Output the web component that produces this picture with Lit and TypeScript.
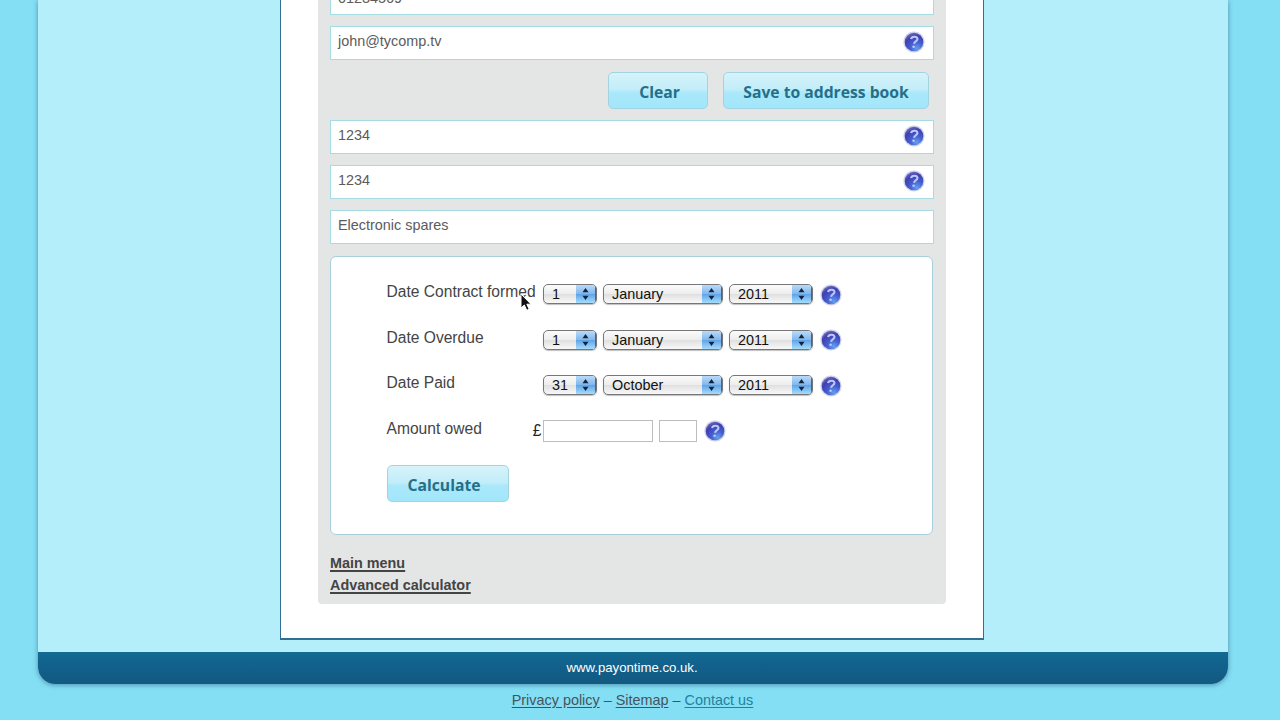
import { LitElement, html, css } from "lit";
import { customElement, property } from "lit/decorators.js";

@customElement("help-icon")
class HelpIcon extends LitElement {
  static styles = css`
    :host { display: block; width: 22px; height: 22px; flex: none; }
    svg { display: block; }
  `;
  render() {
    return html`<svg width="22" height="22" viewBox="0 0 22 22">
      <defs>
        <radialGradient id="g" cx="0.65" cy="0.85" r="0.85">
          <stop offset="0" stop-color="#64a0ee" />
          <stop offset="0.4" stop-color="#4560d0" />
          <stop offset="0.8" stop-color="#403fb0" />
          <stop offset="1" stop-color="#6668b8" />
        </radialGradient>
      </defs>
      <circle cx="11" cy="11" r="10.6" fill="#b9bfe6" opacity="0.7" />
      <circle cx="11" cy="11" r="9.3" fill="url(#g)" />
      <path d="M8 8.1C8.5 6.1 10 5.6 11.7 5.7C13.8 5.8 14.9 7.1 14.3 8.7C13.7 10.2 11.5 10.7 11 12.8" fill="none" stroke="#bcc6fa" stroke-width="2.1" />
      <circle cx="10.6" cy="15.7" r="1.3" fill="#bcc6fa" />
    </svg>`;
  }
}

@customElement("popup-select")
class PopupSelect extends LitElement {
  @property() value = "";
  static styles = css`
    :host { display: block; }
    .box {
      box-sizing: border-box; height: 20px; display: flex; border: 1px solid #77777a;
      border-radius: 5px; overflow: hidden; box-shadow: 0 1px 1px rgba(0, 0, 0, 0.25);
      background: linear-gradient(#fbfbfb, #ededed 48%, #e0e0e0 52%, #f8f8f8);
    }
    .label { flex: 1; padding-left: 8.5px; font: 14.4px/18px "Liberation Sans", Arial, sans-serif; color: #111; }
    .cap {
      width: 20px; box-shadow: inset -1px 0 #3567ab;
      background: linear-gradient(#b8dbf8, #82b8ee 48%, #61a5e8 52%, #a4dcfb);
    }
    svg { display: block; }
  `;
  render() {
    return html`<div class="box"><span class="label">${this.value}</span>
      <span class="cap"><svg width="20" height="18" viewBox="0 0 20 18">
        <path d="M6.5 7.2L9.5 3L12.5 7.2ZM6.5 10.8L9.5 15L12.5 10.8Z" fill="#10243f" />
      </svg></span></div>`;
  }
}

const DATES = [
  { label: "Date Contract formed", day: "1", month: "January", year: "2011" },
  { label: "Date Overdue", day: "1", month: "January", year: "2011" },
  { label: "Date Paid", day: "31", month: "October", year: "2011" },
];

@customElement("app-root")
class AppRoot extends LitElement {
  static styles = css`
    :host {
      display: block; position: relative; width: 1280px; height: 720px; overflow: hidden;
      background: #84dff4; font-family: "Liberation Sans", Arial, sans-serif; color: #444;
    }
    * { box-sizing: border-box; }
    .wrap {
      width: 1190px; height: 684px; margin-left: 38px; background: #b3eefa; display: flex;
      flex-direction: column; border-radius: 0 0 17px 17px; overflow: hidden;
      box-shadow: 0 1px 5px rgba(40, 90, 130, 0.6);
    }
    .page {
      width: 704px; height: 640px; margin: 0 0 12px 242px; padding: 0 37px; background: #fff;
      border: solid #326f92; border-width: 0 1px 2px;
    }
    .form { width: 628px; height: 604px; padding: 0 12px; background: #e4e6e6; border-radius: 0 0 4px 4px; }
    .field {
      width: 604px; height: 34px; display: flex; justify-content: space-between; padding: 4px 8px 0 7px;
      border: 1px solid #a5dbe3; background: #fff; font-size: 14.4px; line-height: 20px; color: #5b5b5b;
    }
    .field + .field { margin-top: 11px; }
    .cut { height: 15px; border-top: 0; padding-top: 0; align-items: flex-end; }
    .cut span { margin-bottom: 6px; }
    .buttons { display: flex; justify-content: flex-end; gap: 15px; padding: 12px 5px 11px 0; }
    .btn {
      height: 37px; border: 1px solid #a3d3e1; border-radius: 5px; text-align: center;
      background: linear-gradient(#d6f3fa, #c1edf9 48%, #aae8fa 56%, #a2e6fb);
      font: bold 15.7px/39px "Open Sans", sans-serif; color: #256f88; white-space: nowrap; padding: 0;
      display: block;
    }
    .clear { width: 100px; padding-left: 3px; }
    .save { width: 206px; }
    .calc { width: 122px; padding-right: 7px; margin-top: 24px; line-height: 39px; }
    .panel {
      width: 603px; height: 279px; margin-top: 12px; padding: 25px 0 0 55.5px; background: #fff;
      border: 1px solid #a9cfdd; border-radius: 6px;
    }
    .row { display: flex; height: 22px; margin-bottom: 23.5px; font-size: 15.6px; line-height: 20px; }
    .lab { width: 156px; display: flex; justify-content: space-between; white-space: nowrap; }
    .pound { color: #222; line-height: 23px; margin-right: 1px; }
    .row popup-select { margin: 2px 6px 0 0; }
    .row help-icon { margin: 1.5px 0 0 1px; }
    .day { width: 54px; }
    .month { width: 120px; }
    .year { width: 84px; }
    .amt { height: 22px; margin: 1px 6px 0 0; border: 1px solid #bdbdbd; background: #fff; }
    .pounds { width: 110px; }
    .pence { width: 38px; }
    .links { padding-top: 17px; font-weight: bold; font-size: 14.4px; line-height: 22px; }
    .links a { display: table; text-decoration: underline; text-underline-offset: 2px; text-decoration-thickness: 2px; }
    .bar {
      height: 32px; flex: none; background: linear-gradient(#136a92, #115f8b 50%, #125a80);
      color: #fff; font-size: 13.2px; line-height: 31px; text-align: center; padding-right: 2px;
    }
    .foot { text-align: center; font-size: 14.4px; line-height: 20px; padding: 6px 15px 0 0; color: #44545c; }
    .foot a { text-decoration: underline; text-underline-offset: 2px; }
    .foot .contact { color: #23819d; }
    .cursor { position: absolute; left: 519px; top: 292px; }
  `;
  render() {
    return html`
      <div class="wrap">
        <div class="page"><div class="form">
          <div class="field cut"><span>01234569</span></div>
          <div class="field"><span>john@tycomp.tv</span><help-icon></help-icon></div>
          <div class="buttons">
            <button class="btn clear">Clear</button>
            <button class="btn save">Save to address book</button>
          </div>
          <div class="field"><span>1234</span><help-icon></help-icon></div>
          <div class="field"><span>1234</span><help-icon></help-icon></div>
          <div class="field"><span>Electronic spares</span></div>
          <div class="panel">
            ${DATES.map((d) => html`<div class="row">
              <div class="lab">${d.label}</div>
              <popup-select class="day" .value=${d.day}></popup-select>
              <popup-select class="month" .value=${d.month}></popup-select>
              <popup-select class="year" .value=${d.year}></popup-select>
              <help-icon></help-icon>
            </div>`)}
            <div class="row">
              <div class="lab"><span>Amount owed</span><span class="pound">£</span></div>
              <div class="amt pounds"></div><div class="amt pence"></div>
              <help-icon></help-icon>
            </div>
            <button class="btn calc">Calculate</button>
          </div>
          <div class="links"><a>Main menu</a><a>Advanced calculator</a></div>
        </div></div>
        <div class="bar">www.payontime.co.uk.</div>
      </div>
      <div class="foot"><a>Privacy policy</a> – <a>Sitemap</a> – <a class="contact">Contact us</a></div>
      <svg class="cursor" width="14" height="20" viewBox="0 0 14 20">
        <path d="M2 2V16L5.3 13L7.8 18.3L10.2 17.2L7.8 12.2H12Z" fill="#111" stroke="#fff" stroke-width="1" />
      </svg>`;
  }
}
